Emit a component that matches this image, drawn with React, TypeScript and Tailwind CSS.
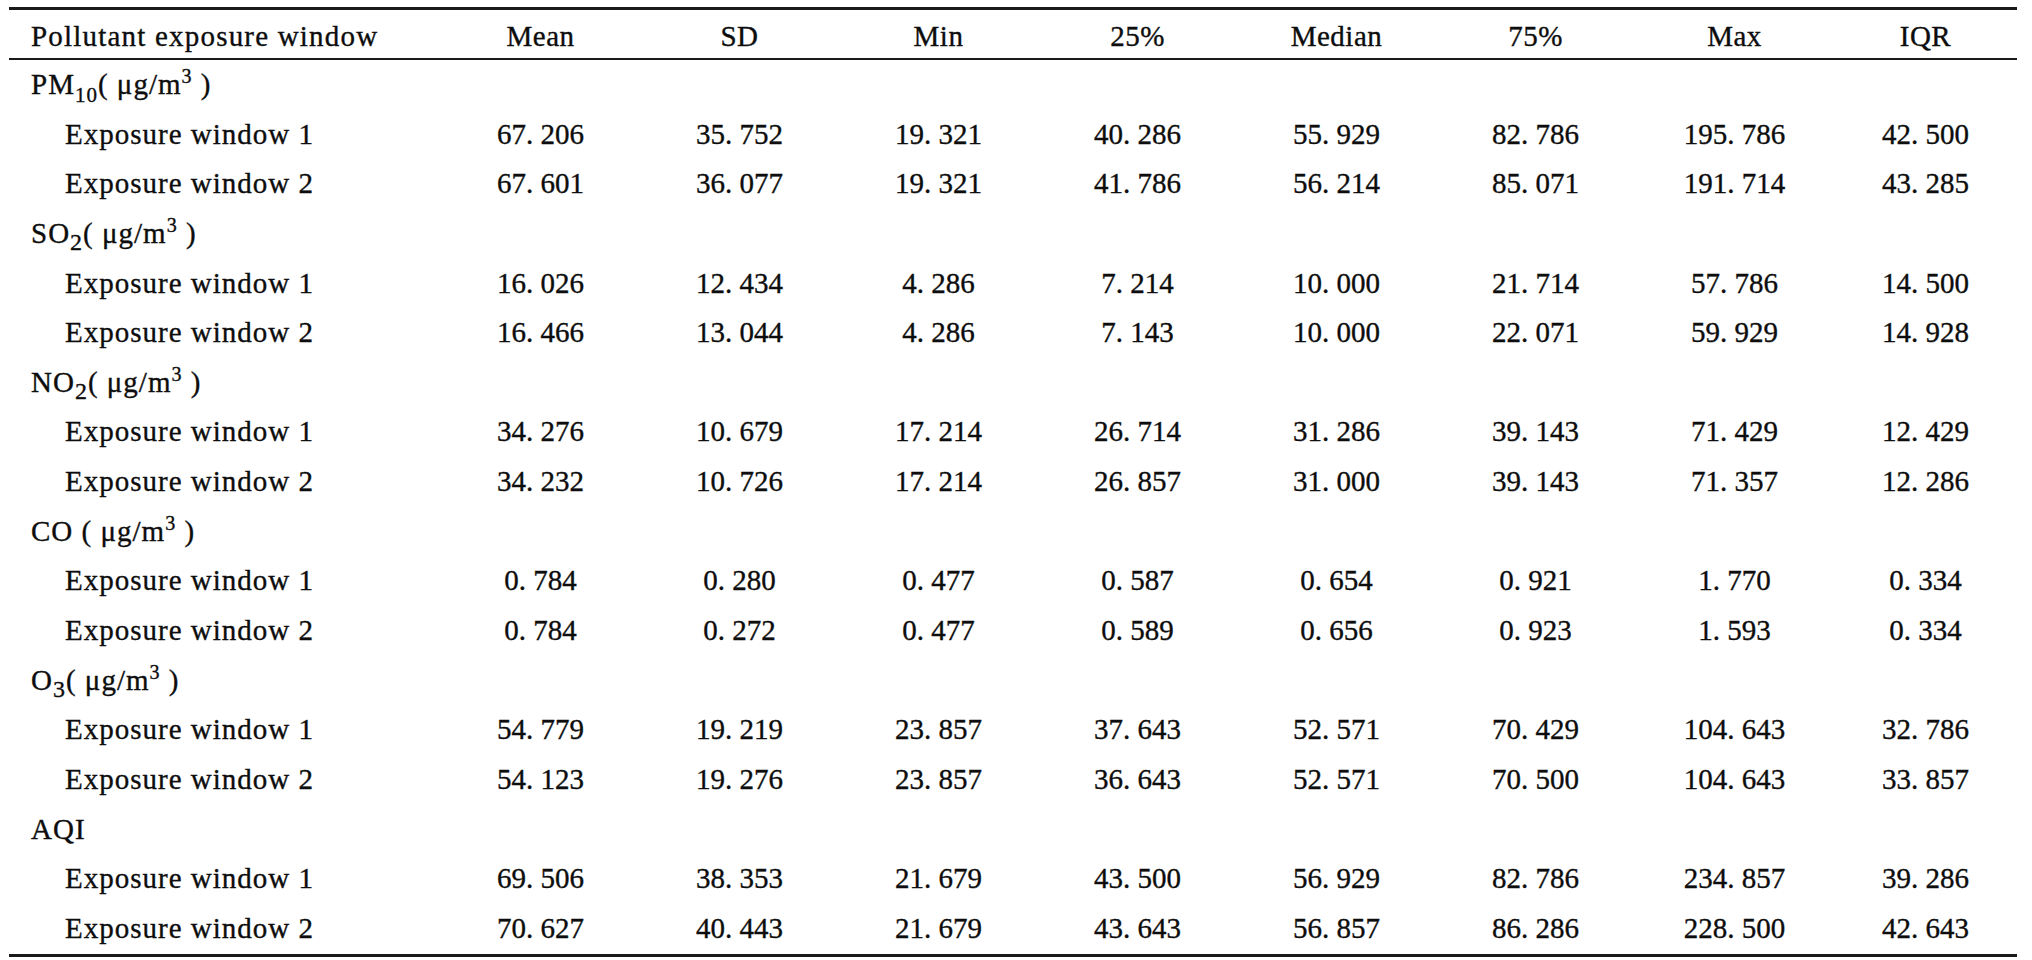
import React from "react";

type Row = { label: string; v: string[] };
type Group = { head: React.ReactNode; rows: Row[] };

const Unit = () => (
  <>
    ( μg/m<sup className="text-[20px] -top-[11px]">3</sup> )
  </>
);

const groups: Group[] = [
  {
    head: (
      <>
        PM<sub className="text-[21px] -bottom-[8px]">10</sub>
        <Unit />
      </>
    ),
    rows: [
      { label: "Exposure window 1", v: ["67. 206", "35. 752", "19. 321", "40. 286", "55. 929", "82. 786", "195. 786", "42. 500"] },
      { label: "Exposure window 2", v: ["67. 601", "36. 077", "19. 321", "41. 786", "56. 214", "85. 071", "191. 714", "43. 285"] },
    ],
  },
  {
    head: (
      <>
        SO<sub className="text-[24px] -bottom-[7px]">2</sub>
        <Unit />
      </>
    ),
    rows: [
      { label: "Exposure window 1", v: ["16. 026", "12. 434", "4. 286", "7. 214", "10. 000", "21. 714", "57. 786", "14. 500"] },
      { label: "Exposure window 2", v: ["16. 466", "13. 044", "4. 286", "7. 143", "10. 000", "22. 071", "59. 929", "14. 928"] },
    ],
  },
  {
    head: (
      <>
        NO<sub className="text-[24px] -bottom-[7px]">2</sub>
        <Unit />
      </>
    ),
    rows: [
      { label: "Exposure window 1", v: ["34. 276", "10. 679", "17. 214", "26. 714", "31. 286", "39. 143", "71. 429", "12. 429"] },
      { label: "Exposure window 2", v: ["34. 232", "10. 726", "17. 214", "26. 857", "31. 000", "39. 143", "71. 357", "12. 286"] },
    ],
  },
  {
    head: (
      <>
        CO <Unit />
      </>
    ),
    rows: [
      { label: "Exposure window 1", v: ["0. 784", "0. 280", "0. 477", "0. 587", "0. 654", "0. 921", "1. 770", "0. 334"] },
      { label: "Exposure window 2", v: ["0. 784", "0. 272", "0. 477", "0. 589", "0. 656", "0. 923", "1. 593", "0. 334"] },
    ],
  },
  {
    head: (
      <>
        O<sub className="text-[24px] -bottom-[7px]">3</sub>
        <Unit />
      </>
    ),
    rows: [
      { label: "Exposure window 1", v: ["54. 779", "19. 219", "23. 857", "37. 643", "52. 571", "70. 429", "104. 643", "32. 786"] },
      { label: "Exposure window 2", v: ["54. 123", "19. 276", "23. 857", "36. 643", "52. 571", "70. 500", "104. 643", "33. 857"] },
    ],
  },
  {
    head: <>AQI</>,
    rows: [
      { label: "Exposure window 1", v: ["69. 506", "38. 353", "21. 679", "43. 500", "56. 929", "82. 786", "234. 857", "39. 286"] },
      { label: "Exposure window 2", v: ["70. 627", "40. 443", "21. 679", "43. 643", "56. 857", "86. 286", "228. 500", "42. 643"] },
    ],
  },
];

const headers = ["Mean", "SD", "Min", "25%", "Median", "75%", "Max", "IQR"];

const gridCols = "grid grid-cols-[432px_199px_199px_199px_199px_199px_199px_199px_183px]";

export default function App() {
  return (
    <div className="w-[2032px] h-[960px] bg-white text-[#0d0d0d] font-['Liberation_Serif','Times_New_Roman',serif] text-[29px] [-webkit-text-stroke:0.35px_#0d0d0d] overflow-hidden">
      <div className="ml-[9px] mt-[7px] w-[2008px] border-t-[3px] border-b-[3px] border-[#1a1a1a]">
        <div className={`${gridCols} h-[50px] pt-[4px] leading-[44px] border-b-2 border-[#1a1a1a]`}>
          <div className="pl-[22px] tracking-[1.2px] whitespace-nowrap">Pollutant exposure window</div>
          {headers.map((h) => (
            <div key={h} className="text-center tracking-[0.5px]">
              {h}
            </div>
          ))}
        </div>
        {groups.map((g, gi) => (
          <React.Fragment key={gi}>
            <div className={`${gridCols} h-[49.65px] leading-[49.65px]`}>
              <div className="pl-[22px] tracking-[1px] whitespace-nowrap">{g.head}</div>
            </div>
            {g.rows.map((r, ri) => (
              <div key={ri} className={`${gridCols} h-[49.65px] leading-[49.65px]`}>
                <div className="pl-[56px] tracking-[1px] whitespace-nowrap">{r.label}</div>
                {r.v.map((val, vi) => (
                  <div key={vi} className="text-center whitespace-pre">
                    {val}
                  </div>
                ))}
              </div>
            ))}
          </React.Fragment>
        ))}
      </div>
    </div>
  );
}
